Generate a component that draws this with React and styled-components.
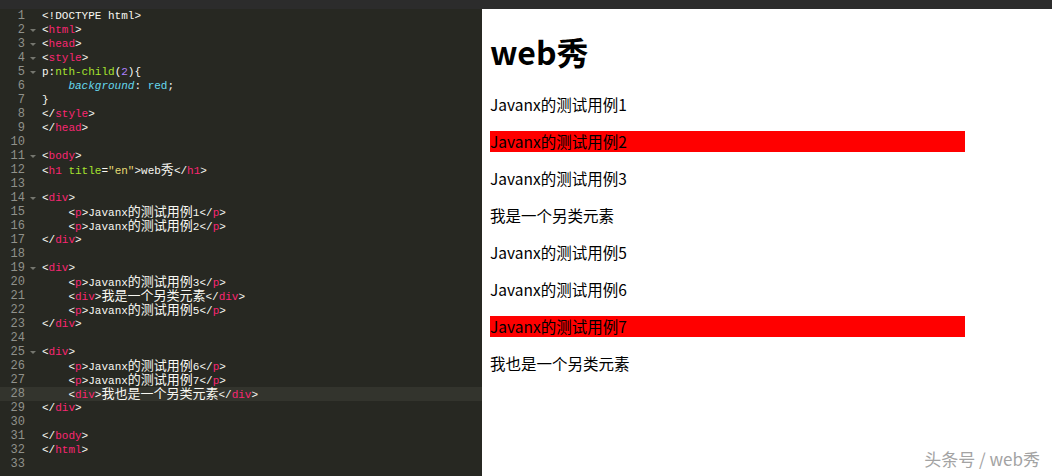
import styled, { createGlobalStyle } from 'styled-components';

const GlobalStyle = createGlobalStyle`
    html, body {
        margin: 0;
        padding: 0;
        background: #272822;
    }
`;

const W = '#f8f8f2';
const P = '#f92672';
const G = '#a6e22e';
const Y = '#e6db74';
const V = '#ae81ff';
const C = '#66d9ef';

const tag = (name, close) => [[W, close ? '</' : '<'], [P, name], [W, '>']];
const inner = (name, text) => [[W, '    <'], [P, name], [W, '>' + text + '</'], [P, name], [W, '>']];

const lines = [
    { toks: [[W, '<!DOCTYPE html>']] },
    { toks: tag('html'), fold: true },
    { toks: tag('head'), fold: true },
    { toks: tag('style'), fold: true },
    { toks: [[W, 'p:'], [G, 'nth-child'], [W, '('], [V, '2'], [W, '){']], fold: true },
    { toks: [[W, '    '], [C, 'background', true], [W, ': '], [C, 'red'], [W, ';']] },
    { toks: [[W, '}']] },
    { toks: tag('style', true) },
    { toks: tag('head', true) },
    { toks: [] },
    { toks: tag('body'), fold: true },
    { toks: [[W, '<'], [P, 'h1'], [W, ' '], [G, 'title'], [W, '='], [Y, '"en"'], [W, '>web秀</'], [P, 'h1'], [W, '>']] },
    { toks: [] },
    { toks: tag('div'), fold: true },
    { toks: inner('p', 'Javanx的测试用例1') },
    { toks: inner('p', 'Javanx的测试用例2') },
    { toks: tag('div', true) },
    { toks: [] },
    { toks: tag('div'), fold: true },
    { toks: inner('p', 'Javanx的测试用例3') },
    { toks: inner('div', '我是一个另类元素') },
    { toks: inner('p', 'Javanx的测试用例5') },
    { toks: tag('div', true) },
    { toks: [] },
    { toks: tag('div'), fold: true },
    { toks: inner('p', 'Javanx的测试用例6') },
    { toks: inner('p', 'Javanx的测试用例7') },
    { toks: inner('div', '我也是一个另类元素'), active: true },
    { toks: tag('div', true) },
    { toks: [] },
    { toks: tag('body', true) },
    { toks: tag('html', true) },
    { toks: [] },
];

const items = [
    { text: 'Javanx的测试用例1' },
    { text: 'Javanx的测试用例2', red: true },
    { text: 'Javanx的测试用例3' },
    { text: '我是一个另类元素' },
    { text: 'Javanx的测试用例5' },
    { text: 'Javanx的测试用例6' },
    { text: 'Javanx的测试用例7', red: true },
    { text: '我也是一个另类元素' },
];

// CJK glyphs take two monospace columns in the editor
function withHan(text) {
    return text.split(/([\u4e00-\u9fff]+)/).map((part, i) =>
        /[\u4e00-\u9fff]/.test(part) ? <Han key={i}>{part}</Han> : part
    );
}

export default function App() {
    return (
        <Page>
            <GlobalStyle />
            <TopBar />
            <Main>
                <Editor>
                    {lines.map((line, n) => (
                        <Line key={n} $active={line.active}>
                            <Num>{n + 1}</Num>
                            <FoldCell>{line.fold && <Fold />}</FoldCell>
                            <Code>
                                {line.toks.map(([color, text, italic], i) => (
                                    <Tok key={i} $c={color} $i={italic}>{withHan(text)}</Tok>
                                ))}
                            </Code>
                        </Line>
                    ))}
                </Editor>
                <Preview>
                    <Title>web秀</Title>
                    {items.map((item, i) => (
                        <Para key={i} $red={item.red}>{item.text}</Para>
                    ))}
                    <Watermark>头条号 / web秀</Watermark>
                </Preview>
            </Main>
        </Page>
    );
}

const Page = styled.div`
    width: 1052px;
    height: 476px;
    display: flex;
    flex-direction: column;
    overflow: hidden;
`;

const TopBar = styled.div`
    height: 9px;
    background: #2c2c2c;
    flex-shrink: 0;
`;

const Main = styled.div`
    display: flex;
    flex: 1;
`;

const Editor = styled.div`
    width: 482px;
    background: #272822;
    display: flex;
    flex-direction: column;
    font-family: "Liberation Mono", "Noto Sans CJK SC", monospace;
    font-size: 11px;
`;

const Line = styled.div`
    display: flex;
    align-items: center;
    height: 14px;
    line-height: 14px;
    background: ${props => props.$active ? '#33342d' : 'transparent'};
`;

const Num = styled.span`
    width: 25px;
    text-align: right;
    color: #90918b;
    font-size: 12px;
`;

const FoldCell = styled.span`
    width: 17px;
    display: flex;
    align-items: center;
    justify-content: center;
`;

const Fold = styled.span`
    width: 0;
    height: 0;
    border-left: 3px solid transparent;
    border-right: 3px solid transparent;
    border-top: 3px solid #75766f;
    margin-left: -2px;
`;

const Code = styled.span`
    white-space: pre;
`;

const Tok = styled.span`
    color: ${props => props.$c};
    font-style: ${props => props.$i ? 'italic' : 'normal'};
`;

const Han = styled.span`
    font-family: "Noto Sans CJK SC", sans-serif;
    font-size: 13px;
    line-height: 14px;
`;

const Preview = styled.div`
    flex: 1;
    background: #fff;
    position: relative;
    display: flex;
    flex-direction: column;
    align-items: flex-start;
    padding-left: 8px;
    font-family: "Noto Sans CJK SC", "Noto Sans", sans-serif;
    color: #000;
`;

const Title = styled.h1`
    margin: 24px 0 24px 0;
    font-size: 32px;
    line-height: 37px;
    font-weight: bold;
`;

const Para = styled.p`
    margin: 0 0 16px 0;
    width: 475px;
    height: 21px;
    line-height: 21px;
    font-size: 15.5px;
    background: ${props => props.$red ? 'red' : 'transparent'};
`;

const Watermark = styled.div`
    position: absolute;
    right: 12px;
    bottom: 5px;
    font-size: 17px;
    color: #a3a3a3;
    text-shadow: 0 0 1px #fff;
`;
